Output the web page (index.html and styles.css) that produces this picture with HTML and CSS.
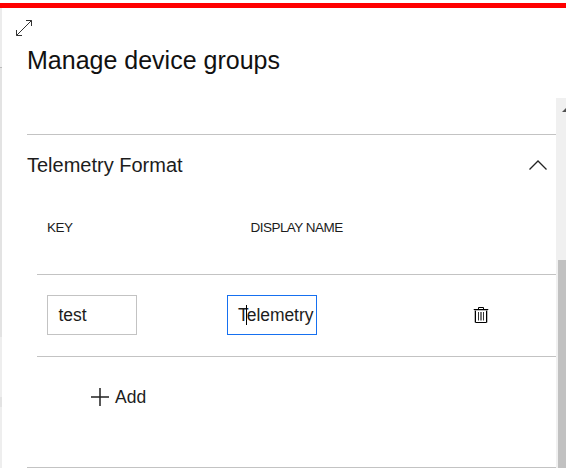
FILE: index.html
```html
<!DOCTYPE html>
<html lang="en">
<head>
<meta charset="utf-8">
<title>Manage device groups</title>
<link rel="stylesheet" href="styles.css">
</head>
<body>
<div class="topbar"></div>
<div class="shell">
  <div class="edge"></div>
  <main class="flyout">
    <header class="header">
      <svg class="expand" width="18" height="18" viewBox="0 0 18 18"><path d="M1.5 16.5 16.5 1.5M11 1.5h5.500v5.500M1.500 11v5.500h5.500"/></svg>
      <h1 class="title">Manage device groups</h1>
    </header>
    <div class="viewport">
      <div class="content">
        <section class="section">
          <div class="section-head">
            <h2 class="section-title">Telemetry Format</h2>
            <svg class="chevron" width="20" height="12" viewBox="0 0 20 12"><path d="M1.500 10.500 10 2l8.500 8.500"/></svg>
          </div>
          <div class="grid">
            <div class="row labels"><span class="label">KEY</span><span class="label display">DISPLAY NAME</span></div>
            <div class="row fields">
              <div class="input">test</div>
              <div class="input focused"><span class="value">Telemetry</span><i class="caret"></i></div>
              <svg class="trash" width="16" height="18" viewBox="0 0 16 18"><path class="frame" d="M0 3.500h16M1.500 4v12.500M14.500 4v12.500M3 4.500h10"/><path class="dark" d="M5.500 3V1.500h5V3M1 3.500h14M2.500 4.500v12h11v-12"/><path class="bars" d="M5.500 6v8.500M10.500 6v8.500"/><path class="middle" d="M7 6h2v8.500H7z"/></svg>
            </div>
          </div>
          <div class="add"><svg width="18" height="18" viewBox="0 0 18 18"><path d="M0 9h18M9 0v18"/></svg><span>Add</span></div>
        </section>
      </div>
      <div class="scrollbar">
        <svg class="arrow" width="10" height="5" viewBox="0 0 10 5"><path d="M0 5 5 0l5 5z"/></svg>
        <div class="thumb"></div>
      </div>
    </div>
  </main>
</div>
</body>
</html>
```
FILE: styles.css
```css
* { box-sizing: border-box; }
body {
  margin: 0;
  width: 566px;
  height: 468px;
  overflow: hidden;
  background: #fff;
  color: #1c1c1c;
  font-family: "Liberation Sans", Arial, sans-serif;
}
svg { display: block; flex: none; fill: none; stroke: #222; }
.topbar { height: 5px; margin-top: 3px; background: #f00; }
.shell { display: flex; height: 460px; }
.edge {
  width: 2px;
  background: linear-gradient(#ececec 0 59px, #bbb 59px 60px, #e3e3e3 60px 329px, #eee 329px 389px, #e3e3e3 389px 399px, #eee 399px);
}
.flyout { flex: 1; display: flex; flex-direction: column; min-width: 0; }
.header { height: 90px; padding: 11px 0 0 13px; }
.expand { stroke: #333; stroke-width: 1; }
.title { margin: 8px 0 0 12px; font-size: 25px; line-height: 30px; font-weight: 400; color: #111; }
.viewport { flex: 1; display: flex; min-height: 0; }
.content { flex: 1; padding: 36px 0 0 25px; overflow: hidden; }
.section { height: 334px; border: solid #c3c3c3; border-width: 1px 0; }
.section-head { display: flex; align-items: center; justify-content: space-between; height: 60px; padding-right: 8px; }
.section-title { margin: 0; font-size: 20px; line-height: 24px; font-weight: 400; }
.chevron { stroke-width: 1.3; }
.grid { margin-left: 10px; }
.row { display: flex; border-bottom: 1px solid #c3c3c3; }
.labels { height: 80px; padding: 24px 0 0 10px; }
.label { width: 203px; font-size: 13.5px; line-height: 17px; letter-spacing: -0.53px; font-kerning: normal; }
.display { padding-left: 0.5px; }
.fields { height: 82px; padding: 20px 0 0 10px; }
.input {
  width: 90px;
  height: 40px;
  padding: 0 0 0 10.4px;
  border: 1px solid #c3c3c3;
  font-size: 17.5px;
  line-height: 38px;
  white-space: nowrap;
}
.focused { position: relative; padding-left: 10px; margin-left: 90px; border-color: #1670f0; }
.value { letter-spacing: -0.05px; }
.caret { position: absolute; left: 18px; top: 9px; width: 1px; height: 20px; background: #000; }
.trash { margin: 11px 0 0 156px; }
.frame { stroke: #bbb; }
.dark { stroke: #000; }
.bars { stroke: #333; }
.middle { fill: #777; stroke: none; }
.add { display: flex; align-items: center; gap: 6px; margin: 30px 0 0 64px; font-size: 17.5px; line-height: 20px; }
.add svg { stroke-width: 1.5; }
.scrollbar { width: 10px; padding: 9px 0 0 2px; background: #f0f0f0; overflow: hidden; }
.arrow { margin-left: 4px; fill: #505050; stroke: none; }
.thumb { height: 208px; margin-top: 148px; background: #c1c1c1; }
```
